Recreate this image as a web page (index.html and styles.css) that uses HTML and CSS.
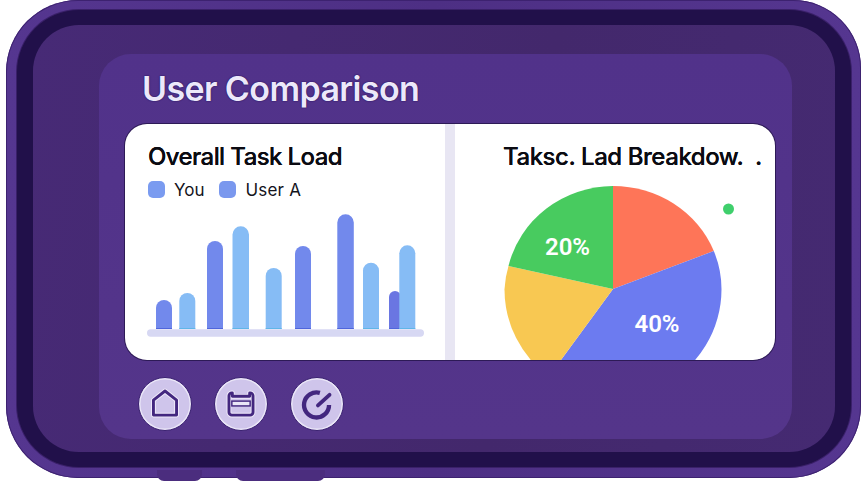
FILE: index.html
```html
<!DOCTYPE html>
<html lang="en">
<head>
<meta charset="utf-8">
<title>User Comparison</title>
<link rel="stylesheet" href="styles.css">
</head>
<body>
<div class="device">
  <span class="tab tab-a"></span>
  <span class="tab tab-b"></span>
  <div class="bezel">
    <div class="screen">
      <main class="panel">
        <h1 class="title">User Comparison</h1>
        <section class="card">
          <div class="pane pane-left">
            <h2 class="pane-title">Overall Task Load</h2>
            <div class="legend">
              <span class="swatch"></span><span class="legend-label">You</span>
              <span class="swatch swatch-second"></span><span class="legend-label">User A</span>
            </div>
            <svg class="bars" viewBox="125 210 320 150" aria-hidden="true">
              <rect class="axis" x="147" y="329.300" width="277" height="7.400" rx="3.700"/>
              <path class="bar-dark" d="M156 329V308a8 8 0 0 1 16 0V329Z"/>
              <path class="bar-light" d="M179.300 329V301a8 8 0 0 1 16 0V329Z"/>
              <path class="bar-dark" d="M207 329V249a8 8 0 0 1 16 0V329Z"/>
              <path class="bar-light" d="M232.500 329V234.500a8.250 8.250 0 0 1 16.500 0V329Z"/>
              <path class="bar-light" d="M265.700 329V276a8 8 0 0 1 16 0V329Z"/>
              <path class="bar-dark" d="M295 329V254a8 8 0 0 1 16 0V329Z"/>
              <path class="bar-dark" d="M337.300 329V222.500a8.250 8.250 0 0 1 16.500 0V329Z"/>
              <path class="bar-light" d="M363 329V270.700a8 8 0 0 1 16 0V329Z"/>
              <path class="bar-deep" d="M389 329V297a6 6 0 0 1 12 0V329Z"/>
              <path class="bar-light" d="M399.300 329V253.300a8 8 0 0 1 16 0V329Z"/>
              <path class="foot-dark" d="M156 328.500h16M207 328.500h16M295 328.500h16M337.300 328.500h16.500M389 328.500h10.300"/>
              <path class="foot-light" d="M179.300 328.500h16M232.500 328.500h16.500M265.700 328.500h16M363 328.500h16M399.300 328.500h16"/>
            </svg>
          </div>
          <div class="divider"></div>
          <div class="pane pane-right">
            <h2 class="pane-title pane-title-right">Taksc. Lad Breakdow.  .</h2>
            <svg class="pie" viewBox="455 172 320 188">
              <path class="slice-red" d="M613 289V186A108.500 103 0 0 1 713.800 251Z"/>
              <path class="slice-blue" d="M613 289L713.800 251A108.500 103 0 0 1 721.500 289A108.500 108.500 0 0 1 548.800 376.600Z"/>
              <path class="slice-yellow" d="M613 289L548.800 376.600A108.500 108.500 0 0 1 504.500 289A108.500 103 0 0 1 508.500 266Z"/>
              <path class="slice-green" d="M613 289L508.500 266A108.500 103 0 0 1 613 186Z"/>
              <circle class="dot" cx="728.500" cy="209" r="5.500"/>
              <text class="pie-label" x="567.500" y="255">20%</text>
              <text class="pie-label" x="657" y="332">40%</text>
            </svg>
          </div>
        </section>
        <nav class="actions">
          <button class="action" type="button" aria-label="Home">
            <svg viewBox="0 0 54 54" aria-hidden="true">
              <path class="halo" d="M27 13.500L39 23V38.500H15V23Z"/>
              <path class="glyph" d="M27 13.500L39 23V38.500H15V23Z"/>
            </svg>
          </button>
          <button class="action" type="button" aria-label="Calendar">
            <svg viewBox="0 0 54 54" aria-hidden="true">
              <path class="halo" d="M18 15.500V19H36V15.500H36.500A3 3 0 0 1 39.500 18.500V35.500A3 3 0 0 1 36.500 38.500H17.500A3 3 0 0 1 14.500 35.500V18.500A3 3 0 0 1 17.500 15.500Z"/>
              <path class="glyph" d="M18 15.500V19H36V15.500H36.500A3 3 0 0 1 39.500 18.500V35.500A3 3 0 0 1 36.500 38.500H17.500A3 3 0 0 1 14.500 35.500V18.500A3 3 0 0 1 17.500 15.500Z"/>
              <rect class="cal-band" x="17.500" y="24" width="19" height="5"/>
            </svg>
          </button>
          <button class="action" type="button" aria-label="Progress">
            <svg viewBox="0 0 54 54" aria-hidden="true">
              <path class="glyph glyph-thick" d="M30 15.500A13 13 0 1 0 39.500 28"/>
              <path class="glyph glyph-needle" d="M28 28.500L40 17.500"/>
            </svg>
          </button>
        </nav>
      </main>
    </div>
  </div>
</div>
</body>
</html>
```

FILE: styles.css
```css
* {
  box-sizing: border-box;
}

html,
body {
  margin: 0;
  padding: 0;
  background: #ffffff;
}

body {
  width: 865px;
  height: 488px;
  overflow: hidden;
  font-family: Inter, "Liberation Sans", sans-serif;
}

.device {
  position: relative;
  width: 855px;
  height: 478px;
  margin-left: 6px;
  padding: 10px 10px 11px 11px;
  border-radius: 72px 68px 72px 72px;
  background: linear-gradient(90deg, #553690 0%, #4d2f84 50%, #553690 100%);
  box-shadow: inset 0 0 0 1px #3d2270;
}

.tab {
  position: absolute;
  top: 470px;
  height: 11px;
  background: #4b2d7e;
  border-radius: 0 0 7px 7px;
}

.tab-a {
  left: 151px;
  width: 45px;
}

.tab-b {
  left: 230px;
  width: 89px;
}

.bezel {
  position: relative;
  height: 100%;
  padding: 15px 16px;
  border-radius: 62px;
  background: #21104a;
  box-shadow: 0 0 0 1px #3a2069;
}

.screen {
  height: 100%;
  padding: 29px 43px 13px 66px;
  border-radius: 46px;
  background: linear-gradient(100deg, #472a76 0%, #43286c 60%, #452a72 100%);
}

.panel {
  display: flex;
  flex-direction: column;
  height: 100%;
  padding: 0 17px 0 26px;
  border-radius: 32px;
  background: linear-gradient(180deg, #51328a 0%, #54358a 100%);
}

.title {
  height: 70px;
  margin: 0;
  padding: 15px 0 0 17px;
  font-size: 34px;
  font-weight: 600;
  line-height: 40px;
  letter-spacing: -0.6px;
  color: #ece8fa;
  white-space: nowrap;
  text-shadow: 0 0 1.500px #23105a, 0 0 1px #23105a;
}

.card {
  display: flex;
  width: 650px;
  height: 236px;
  flex: none;
  overflow: hidden;
  border-radius: 22px;
  background: #ffffff;
  box-shadow: 0 0 0 1px #2d1a56;
}

.pane {
  display: flex;
  flex-direction: column;
  width: 320px;
  flex: none;
}

.pane-title {
  height: 48px;
  margin: 0;
  padding-top: 18px;
  font-size: 24px;
  font-weight: 500;
  line-height: 30px;
  letter-spacing: -0.6px;
  color: #0b0b12;
  white-space: pre;
  text-shadow: 0 0 0.500px #0b0b12;
}

.pane-left .pane-title {
  padding-left: 23px;
}

.pane-title-right {
  padding-left: 48px;
  letter-spacing: -0.45px;
}

.legend {
  display: flex;
  align-items: center;
  height: 38px;
  padding: 0 0 3px 23px;
}

.swatch {
  width: 17px;
  height: 17px;
  margin-right: 9px;
  border-radius: 5px;
  background: #7a9bf0;
}

.swatch-second {
  margin-left: 15px;
  background: #7a98ee;
}

.legend-label {
  font-size: 17px;
  line-height: 20px;
  color: #14141c;
}

.legend-label:last-child {
  letter-spacing: 0.2px;
}

.bars {
  display: block;
  width: 320px;
  height: 150px;
}

.axis {
  fill: #d7d8f3;
}

.bar-dark {
  fill: #7289ec;
}

.bar-light {
  fill: #86bcf5;
}

.bar-deep {
  fill: #6a76e2;
}

.foot-dark {
  fill: none;
  stroke: #4f66dc;
  stroke-width: 1;
}

.foot-light {
  fill: none;
  stroke: #5fb6e8;
  stroke-width: 1;
}

.divider {
  width: 10px;
  flex: none;
  background: #e8e6f3;
}

.pie {
  display: block;
  width: 320px;
  height: 188px;
}

.slice-red {
  fill: #fe7558;
}

.slice-blue {
  fill: #6c7bf0;
}

.slice-yellow {
  fill: #f8c852;
}

.slice-green {
  fill: #48cb5f;
}

.dot {
  fill: #3fcf6c;
}

.pie-label {
  font-family: Roboto, "Liberation Sans", sans-serif;
  font-size: 24px;
  font-weight: 600;
  fill: #ffffff;
  text-anchor: middle;
}

.actions {
  display: flex;
  gap: 22px;
  padding: 17px 0 0 13px;
}

.action {
  width: 54px;
  height: 54px;
  padding: 0;
  border: 1.500px solid #3a2170;
  border-radius: 50%;
  background: #cfc5eb;
  box-shadow: inset 0 0 0 1.500px #eae6f7;
}

.action svg {
  display: block;
  width: 100%;
  height: 100%;
}

.halo {
  fill: none;
  stroke: #efeafa;
  stroke-width: 5;
  stroke-linejoin: round;
}

.glyph {
  fill: none;
  stroke: #43277f;
  stroke-width: 3;
  stroke-linejoin: round;
}

.glyph-thick {
  stroke-width: 4.500;
}

.glyph-needle {
  stroke-width: 4;
  stroke-linecap: round;
}

.cal-band {
  fill: #eae6f7;
  stroke: #43277f;
  stroke-width: 1.500;
}
```
